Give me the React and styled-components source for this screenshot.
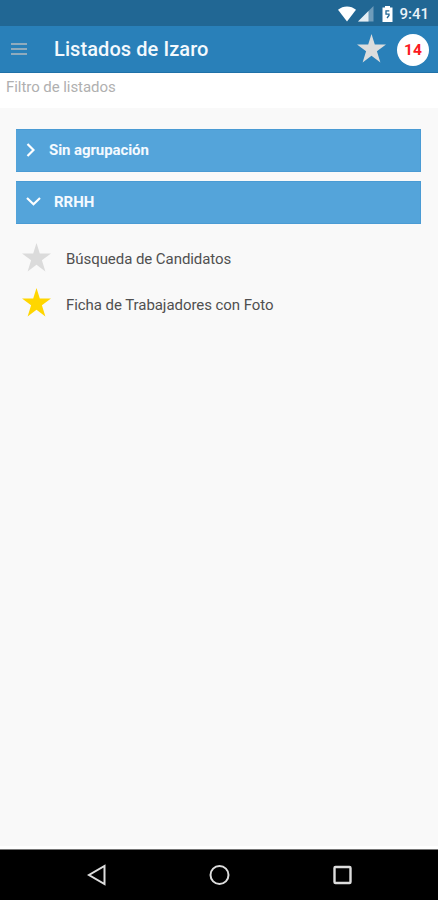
import React from 'react'
import styled, { createGlobalStyle } from 'styled-components'

const GlobalStyle = createGlobalStyle`
  * { box-sizing: border-box; }
  body {
    margin: 0;
    background: #f9f9f9;
    font-family: Roboto, sans-serif;
  }
`
const Screen = styled.div`
  height: 900px;
  display: flex;
  flex-direction: column;
  overflow: hidden;
`
const StatusBar = styled.div`
  height: 26px;
  flex: none;
  display: flex;
  align-items: center;
  justify-content: flex-end;
  padding: 2px 9px 0 0;
  background: #216794;
`
const StatusIcon = styled.svg`
  display: block;
  margin-right: ${({gap}) => gap}px;
`
const Time = styled.span`
  font-size: 15px;
  font-weight: 500;
  line-height: 18px;
  color: #e9f2f8;
`
const Header = styled.header`
  height: 47px;
  flex: none;
  display: flex;
  align-items: center;
  padding: 0 9px 0 11px;
  background: #2980b9;
  border-bottom: 1px solid #1f71a8;
  & > svg {
    margin-bottom: 2px;
  }
`
const MenuButton = styled.div`
  width: 16px;
  display: grid;
  gap: 3px;
  span {
    height: 2px;
    background: #8fabbd;
  }
`
const Title = styled.h1`
  flex: 1;
  margin: 0 0 0 27px;
  font-size: 20px;
  font-weight: 500;
  line-height: 24px;
  letter-spacing: 0.08px;
  color: #f3f9fd;
`
const Badge = styled.div`
  width: 32px;
  height: 32px;
  margin: 1px 0 0 11px;
  display: flex;
  align-items: center;
  justify-content: center;
  border-radius: 50%;
  background: #fff;
  color: #fb1a22;
  font-size: 15.5px;
  font-weight: 700;
`
const Filter = styled.div`
  height: 35px;
  flex: none;
  padding: 5px 6px;
  background: #fff;
  color: #b0b0b0;
  font-size: 15px;
  line-height: 18px;
`
const Content = styled.main`
  flex: 1;
  padding: 21px 17px 0 16px;
  background: #f9f9f9;
  border-bottom: 3px solid #fff;
`
const Group = styled.div`
  height: 43px;
  display: flex;
  align-items: center;
  margin-bottom: 9px;
  padding: 0 0 2px 10px;
  background: #54a4da;
  border: 1px solid #4a9bd4;
  border-left-width: 0;
  color: #f4faff;
  font-size: 15px;
  font-weight: 700;
  line-height: 18px;
  svg {
    margin-right: ${({gap}) => gap}px;
  }
`
const List = styled.div`
  padding: 2px 0 0 6px;
`
const Item = styled.div`
  height: 45px;
  display: flex;
  align-items: center;
  color: #505050;
  font-size: 15px;
  line-height: 18px;
  svg {
    margin-right: 15px;
  }
  span {
    padding-top: 2px;
  }
  & + & span {
    padding-top: 4px;
  }
`
const NavBar = styled.nav`
  height: 51px;
  flex: none;
  display: flex;
  align-items: center;
  padding: 0 0 0 86px;
  background: #000;
  border-top: 1px solid #777;
  svg + svg {
    margin-left: 101px;
  }
`
const Label = styled.span`
  letter-spacing: ${({tracking}) => tracking || 0}px;
  white-space: nowrap;
`

const Star = ({ color }) => (
  <svg width="29" height="29" viewBox="0 0 29 29">
    <path fill={color} d="M14.5 0 17.8 10.5H29L19.9 17.2 23.4 28.5 14.5 21.7 5.6 28.5 9.1 17.2 0 10.5H11.2Z" />
  </svg>
)

const StatusIcons = () => (
  <>
    <StatusIcon gap={2} width="18" height="16" viewBox="0 0 18 16">
      <path fill="#fff" d="M0 3.8C5-.7 13-.7 18 3.8L9 15.5Z" />
    </StatusIcon>
    <StatusIcon gap={8} width="16" height="16" viewBox="0 0 16 16">
      <path fill="#6f9cba" d="M15.5 0V15.5H0Z" />
      <path fill="#e4eef4" d="M10.5 5V15.5H0Z" />
    </StatusIcon>
    <StatusIcon gap={6.5} width="11" height="16" viewBox="0 0 11 16">
      <path fill="#fff" d="M3 0H8V1.5H10.5V16H.5V1.5H3Z" />
      <path fill="none" stroke="#216794" strokeWidth="1.3" d="M7.3 4.8H4V8.2H7V9.5L5 12" />
    </StatusIcon>
  </>
)

export default () => (
  <Screen>
    <GlobalStyle />
    <StatusBar>
      <StatusIcons />
      <Time>9:41</Time>
    </StatusBar>
    <Header>
      <MenuButton><span /><span /><span /></MenuButton>
      <Title>Listados de Izaro</Title>
      <Star color="#dcdddd" />
      <Badge>14</Badge>
    </Header>
    <Filter><Label tracking={-0.06}>Filtro de listados</Label></Filter>
    <Content>
      <Group gap={14}>
        <svg width="9" height="14" viewBox="0 0 9 14" fill="none" stroke="#fff" strokeWidth="2.2">
          <path d="M1.5 1 7.5 7 1.5 13" />
        </svg>
        <Label tracking={-0.08}>Sin agrupación</Label>
      </Group>
      <Group gap={13}>
        <svg width="15" height="9" viewBox="0 0 15 9" fill="none" stroke="#fff" strokeWidth="2.2">
          <path d="M1 1 7.5 7.2 14 1" />
        </svg>
        <Label>RRHH</Label>
      </Group>
      <List>
        <Item><Star color="#dbdbdb" /><Label tracking={-0.06}>Búsqueda de Candidatos</Label></Item>
        <Item><Star color="#ffd600" /><Label tracking={-0.06}>Ficha de Trabajadores con Foto</Label></Item>
      </List>
    </Content>
    <NavBar>
      <svg width="21" height="22" viewBox="0 0 21 22" fill="none" stroke="#ddd" strokeWidth="2">
        <path d="M18.5 2V20L3 11Z" />
      </svg>
      <svg width="22" height="22" viewBox="0 0 22 22" fill="none" stroke="#ddd" strokeWidth="2">
        <circle cx="11.5" cy="11" r="9" />
      </svg>
      <svg width="22" height="22" viewBox="0 0 22 22" fill="none" stroke="#ddd" strokeWidth="2.4">
        <rect x="3.5" y="3" width="16" height="16" rx="1" />
      </svg>
    </NavBar>
  </Screen>
)
